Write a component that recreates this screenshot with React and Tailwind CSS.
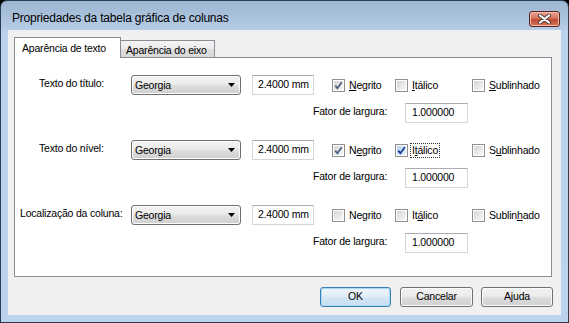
import React from "react";

const font = { fontFamily: '"Liberation Sans", Arial, sans-serif' };
const txt = "text-[10.5px] tracking-[-0.2px] text-black whitespace-nowrap";

function CheckMark({ dark }) {
  return (
    <svg width="9" height="9" viewBox="0 0 9 9">
      <path
        d="M1.2 4.6 L3.4 7.2 L7.8 1.2"
        fill="none"
        stroke={dark ? "#1c3f94" : "#4d6185"}
        strokeWidth="1.8"
      />
    </svg>
  );
}

function Check({ checked, dark, focus, children, className = "" }) {
  return (
    <div className={"flex items-center " + className}>
      <span className="w-[13px] h-[13px] border border-[#8f8f8f] bg-white p-[1px] flex">
        <span
          className={
            "flex-1 flex items-center justify-center " +
            (dark
              ? "bg-[linear-gradient(135deg,#b8d3ef,#eaf3fc)]"
              : "bg-[linear-gradient(135deg,#d6d6d6,#f8f8f8)]")
          }
        >
          {checked && <CheckMark dark={dark} />}
        </span>
      </span>
      <span
        className={
          "ml-[2px] px-[1px] leading-[13px] border " +
          txt +
          (focus ? " border-dotted border-[#333]" : " border-transparent")
        }
      >
        {children}
      </span>
    </div>
  );
}

function Combo() {
  return (
    <div className="w-[110px] h-[20px] rounded-[3px] border border-[#707070] bg-[linear-gradient(180deg,#f2f2f2,#ebebeb_45%,#dddddd_55%,#cfcfcf)] flex items-center justify-between pl-[3px] pr-[5px] shadow-[inset_0_0_0_1px_#fcfcfc]">
      <span className={"leading-none " + txt}>Georgia</span>
      <svg width="7" height="4" viewBox="0 0 7 4">
        <path d="M0 0 H7 L3.5 4 Z" fill="#000" />
      </svg>
    </div>
  );
}

function Field({ value, w }) {
  return (
    <div
      className={
        "h-[20px] border border-[#d5d5d5] border-t-[#abadb3] bg-white flex items-center pl-[5px] " +
        txt +
        " " +
        w
      }
    >
      {value}
    </div>
  );
}

function Row({ label, labelPad, checks }) {
  return (
    <>
      <div className="flex items-center h-[20px]">
        <div className={"w-[116px] pb-[2px] " + txt + " " + labelPad}>{label}</div>
        <Combo />
        <div className="ml-[11px]">
          <Field value="2.4000 mm" w="w-[62px]" />
        </div>
        <div className="ml-[18px] flex items-center">
          <Check checked={checks[0].checked} className="w-[63px]">
            {checks[0].text}
          </Check>
          <Check
            checked={checks[1].checked}
            dark={checks[1].dark}
            focus={checks[1].focus}
            className="w-[77px]"
          >
            {checks[1].text}
          </Check>
          <Check>{checks[2].text}</Check>
        </div>
      </div>
      <div className="flex items-center h-[20px] mt-[8px] pl-[298px]">
        <div className={"w-[92px] pb-[2px] " + txt}>Fator de largura:</div>
        <Field value="1.000000" w="w-[63px] pl-[6px]" />
      </div>
    </>
  );
}

function Button({ children, primary, w }) {
  return (
    <div
      className={
        "h-[20px] rounded-[3px] border flex items-center justify-center " +
        txt +
        " " +
        w +
        (primary
          ? " border-[#3c7fb1] bg-[linear-gradient(180deg,#eef5fb,#e3eef8_45%,#d2e6f5_55%,#c6dff2)] shadow-[inset_0_0_0_1px_#a7d8f5]"
          : " border-[#707070] bg-[linear-gradient(180deg,#f2f2f2,#ebebeb_45%,#dddddd_55%,#cfcfcf)] shadow-[inset_0_0_0_1px_#fbfbfb]")
      }
    >
      {children}
    </div>
  );
}

export default function App() {
  return (
    <div className="w-[569px] h-[323px] bg-black" style={font}>
      <div className="h-full rounded-t-[7px] border border-[#2e3d4d] bg-[linear-gradient(180deg,#9db6d1_0px,#b4cce5_28px,#bad2eb_30px,#bbd3ec)] flex flex-col">
        <div className="h-[29px] flex justify-between pl-[11px] pr-[8px] shrink-0">
          <span className="pt-[9px] text-[12px] tracking-[-0.2px] leading-[16px] text-black whitespace-nowrap">
            Propriedades da tabela gráfica de colunas
          </span>
          <div className="mt-[10px] w-[31px] h-[16px] rounded-[3px] border border-[#5c2219] bg-[linear-gradient(180deg,#e8a595,#d4735e_45%,#c14a31_55%,#d2765f)] flex items-center justify-center shadow-[inset_0_0_0_1px_#f0bcae]">
            <svg width="13" height="10" viewBox="0 0 13 10">
              <path d="M2 1.5 L11 8.5 M11 1.5 L2 8.5" stroke="#4b3a36" strokeWidth="4" strokeLinecap="round" />
              <path d="M2 1.5 L11 8.5 M11 1.5 L2 8.5" stroke="#ffffff" strokeWidth="2.2" strokeLinecap="round" />
            </svg>
          </div>
        </div>

        <div className="flex-1 mx-[7px] mb-[7px] bg-[#f0f0f0] flex flex-col pt-[7px]">
          <div className="flex items-end h-[20px] pl-[6px]">
            <div className={"relative z-10 h-[21px] -mb-px w-[107px] bg-white border border-b-0 border-[#898c95] pl-[7px] pt-[3px] " + txt}>
              Aparência de texto
            </div>
            <div className={"h-[17px] w-[94px] border border-l-0 border-b-0 border-[#898c95] bg-[linear-gradient(180deg,#f3f3f3,#ebebeb_50%,#dedede_50%,#d9d9d9)] pl-[5px] pt-[2px] " + txt}>
              Aparência do eixo
            </div>
          </div>

          <div className="ml-[6px] mr-[9px] h-[220px] border border-[#898c95] bg-white pt-[17px]">
            <Row
              label="Texto do título:"
              labelPad="pl-[24px]"
              checks={[
                { text: <><u>N</u>egrito</>, checked: true },
                { text: <><u>I</u>tálico</> },
                { text: <><u>S</u>ublinhado</> },
              ]}
            />
            <div className="h-[17px]" />
            <Row
              label="Texto do nível:"
              labelPad="pl-[24px]"
              checks={[
                { text: <>N<u>e</u>grito</>, checked: true },
                { text: <>I<u>t</u>álico</>, checked: true, dark: true, focus: true },
                { text: <>S<u>u</u>blinhado</> },
              ]}
            />
            <div className="h-[17px]" />
            <Row
              label="Localização da coluna:"
              labelPad="pl-[5px]"
              checks={[
                { text: <>Ne<u>g</u>rito</> },
                { text: <>It<u>á</u>lico</> },
                { text: <>Sublin<u>h</u>ado</> },
              ]}
            />
          </div>

          <div className="flex justify-end mt-[10px] pr-[8px]">
            <Button primary w="w-[71px]">OK</Button>
            <div className="w-[9px]" />
            <Button w="w-[73px]">Cancelar</Button>
            <div className="w-[8px]" />
            <Button w="w-[72px]">Ajuda</Button>
          </div>
        </div>
      </div>
    </div>
  );
}
